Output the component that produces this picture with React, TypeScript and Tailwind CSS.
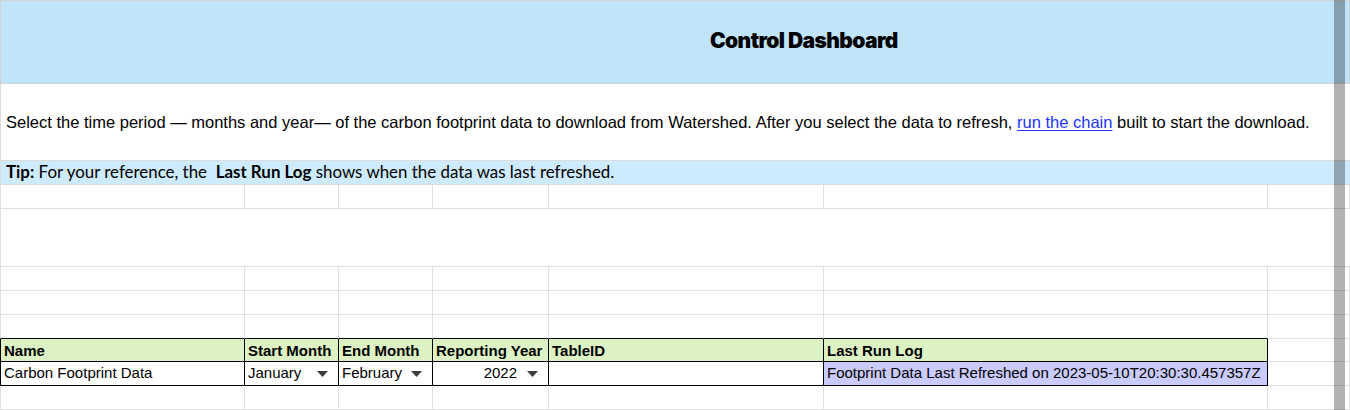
import React from 'react'

const widths = [245, 94, 94, 116, 275, 444]
const arial = { fontFamily: '"Liberation Sans", Arial, sans-serif' }

type CellProps = {
  i: number
  dark?: boolean
  darkBottom?: boolean
  className?: string
  children?: React.ReactNode
}

// one spreadsheet cell; index 6 is the last column that fills the rest of the row
function Cell({ i, dark, darkBottom, className = '', children }: CellProps) {
  const w = i < 6 ? widths[i] : undefined
  const right = dark ? 'border-r-black' : 'border-r-[#e0e0e0]'
  const bottom = dark || darkBottom ? 'border-b-black' : 'border-b-[#e0e0e0]'
  const left = i === 0 ? (dark ? 'border-l border-l-black' : 'border-l border-l-[#e0e0e0]') : ''
  return (
    <div
      className={`h-full border-r border-b ${right} ${bottom} ${left} ${i === 6 ? 'flex-1' : 'shrink-0'} ${className}`}
      style={w ? { width: w } : undefined}
    >
      {children}
    </div>
  )
}

function EmptyRow({ darkBottom = false }: { darkBottom?: boolean }) {
  return (
    <div className="flex h-[24px]">
      {[0, 1, 2, 3, 4, 5, 6].map((i) => (
        <Cell key={i} i={i} darkBottom={darkBottom && i < 6} />
      ))}
    </div>
  )
}

function Caret() {
  return (
    <svg width="11" height="6" viewBox="0 0 11 6" className="shrink-0">
      <path d="M0 0 H11 L5.5 6 Z" fill="#3c3c3c" />
    </svg>
  )
}

export default function App() {
  return (
    <div className="relative h-[410px] w-[1350px] overflow-hidden bg-white text-black">
      {/* title band */}
      <div className="flex h-[84px] items-center border border-[#d4d4d4] bg-[#bfe4fc] pb-[3px] pl-[709px]">
        <span
          className="text-[21px] font-black tracking-[-0.6px]"
          style={{ fontFamily: 'Inter, "Noto Sans", sans-serif' }}
        >
          Control Dashboard
        </span>
      </div>

      {/* description */}
      <div
        className="flex h-[77px] items-center border-b border-l border-[#dcdcdc] pl-[5px] text-[16.5px]"
        style={arial}
      >
        <span>
          Select the time period — months and year— of the carbon footprint data to download from Watershed. After you
          select the data to refresh,{' '}
          <a href="#" className="text-[#2233ff] underline underline-offset-2">
            run the chain
          </a>{' '}
          built to start the download.
        </span>
      </div>

      {/* tip */}
      <div
        className="flex h-[24px] items-center border-b border-l border-[#dcdcdc] bg-[#cdebfc] pb-[2px] pl-[5px] text-[16.9px]"
        style={{ fontFamily: 'Lato, "Noto Sans", sans-serif' }}
      >
        <span className="whitespace-pre">
          <b>Tip:</b> For your reference, the  <b>Last Run Log</b> shows when the data was last refreshed.
        </span>
      </div>

      <EmptyRow />
      <div className="h-[58px] border-b border-l border-[#e0e0e0]" />
      <EmptyRow />
      <EmptyRow />
      <EmptyRow darkBottom />

      {/* table header */}
      <div className="flex h-[23px] text-[15px] font-bold" style={arial}>
        {['Name', 'Start Month', 'End Month', 'Reporting Year', 'TableID', 'Last Run Log'].map((t, i) => (
          <Cell key={t} i={i} dark className="flex items-center bg-[#dcf2c4] pl-[3px] leading-none">
            {t}
          </Cell>
        ))}
        <Cell i={6} />
      </div>

      {/* data row */}
      <div className="flex h-[24px] text-[15px]" style={arial}>
        <Cell i={0} dark className="flex items-center pl-[3px]">
          Carbon Footprint Data
        </Cell>
        <Cell i={1} dark className="flex items-center justify-between pl-[3px] pr-[10px]">
          January
          <Caret />
        </Cell>
        <Cell i={2} dark className="flex items-center justify-between pl-[3px] pr-[10px]">
          February
          <Caret />
        </Cell>
        <Cell i={3} dark className="flex items-center justify-end gap-[10px] pr-[10px]">
          2022
          <Caret />
        </Cell>
        <Cell i={4} dark />
        <Cell i={5} dark className="flex items-center bg-[#c9cbfc] pl-[3px]">
          Footprint Data Last Refreshed on 2023-05-10T20:30:30.457357Z
        </Cell>
        <Cell i={6} />
      </div>

      <EmptyRow />

      {/* overlay scrollbar */}
      <div className="absolute bottom-0 left-[1334px] top-0 w-[11px] bg-black/30" />
    </div>
  )
}
